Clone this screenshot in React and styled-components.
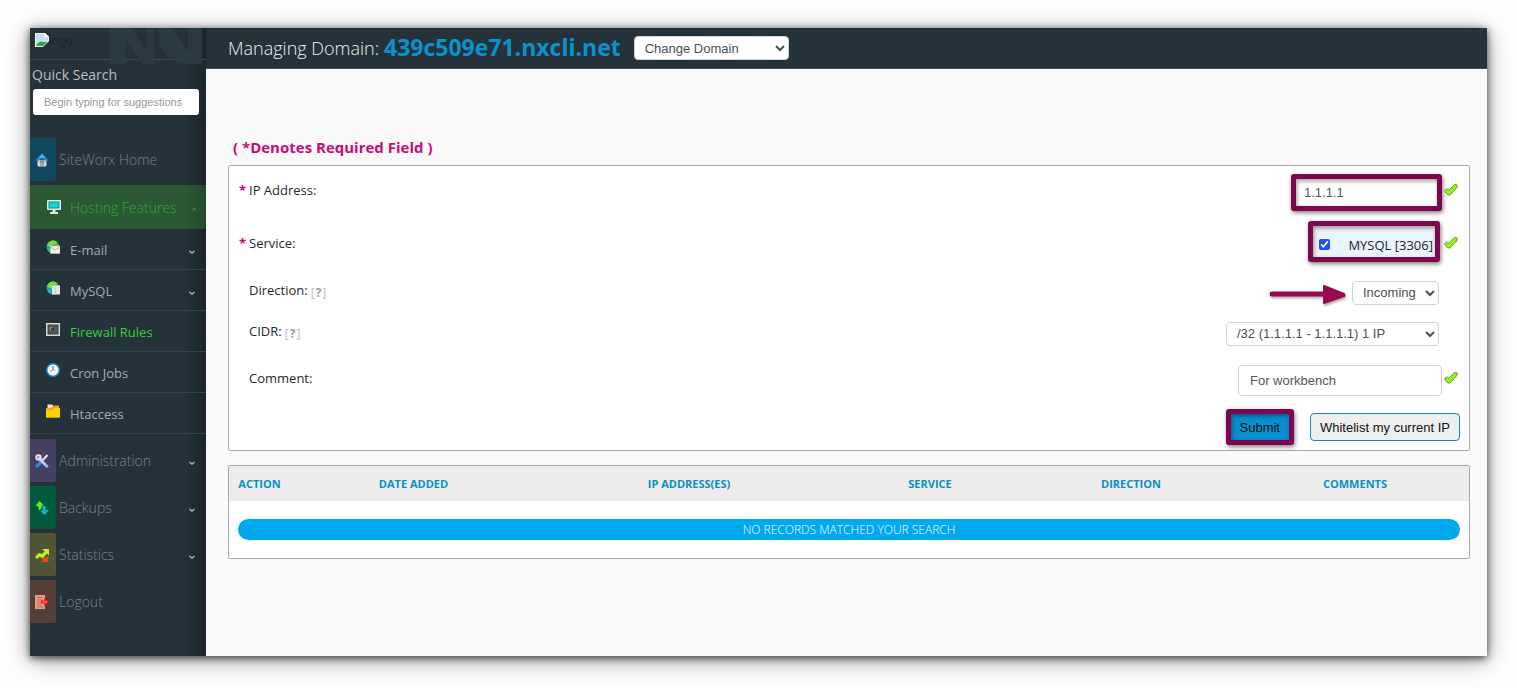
import React, { useState } from "react";
import styled, { createGlobalStyle } from "styled-components";

const GlobalStyle = createGlobalStyle`
  * {
    box-sizing: border-box;
  }

  body {
    margin: 0;
    background: #fefefe;
    font-family: "Open Sans", "Noto Sans", sans-serif;
    font-size: 13px;
    color: #212529;
  }
`;

const hostingLinks = [
  { label: "E-mail", icon: "mail", caret: true },
  { label: "MySQL", icon: "database", caret: true },
  { label: "Firewall Rules", icon: "firewall", active: true },
  { label: "Cron Jobs", icon: "clock" },
  { label: "Htaccess", icon: "folder" },
];

const bottomLinks = [
  { label: "Administration", icon: "tools", color: "#453f62", caret: true },
  { label: "Backups", icon: "backup", color: "#015a3b", caret: true },
  { label: "Statistics", icon: "stats", color: "#4f5535", caret: true },
  { label: "Logout", icon: "logout", color: "#553f37" },
];

const columns = [
  { title: "Action", width: 59 },
  { title: "Date Added", width: 251 },
  { title: "IP Address(es)", width: 300 },
  { title: "Service", width: 182 },
  { title: "Direction", width: 220 },
  { title: "Comments", width: 228 },
];

const globe = (
  <>
    <circle cx="7" cy="7" r="6.5" fill="#1596d8" />
    <path d="M1 5 Q3 0 8 .5 L11.500 2 L9 5 L7 4 L6 8 L2.500 6.500Z" fill="#7be02c" />
    <path d="M1 7.500 L5 9 L5 13 Q1.500 11.500 1 7.500Z" fill="#29c4a0" />
    <path d="M10 3 L13 5 L12 6 L9 6Z" fill="#4fc02c" />
  </>
);

const drawings = {
  home: (
    <>
      <path d="M2.500 7 H11.500 V12 Q11.500 13.500 10 13.500 H4 Q2.500 13.500 2.500 12Z" fill="#dcdcdc" />
      <path d="M7 0 L13 7 L11.500 8.500 L7 5 L2.500 8.500 L1 7Z" fill="#1d8fe8" />
      <path d="M7 2 L10 5.500 L7 4 L4 5.500Z" fill="#6cc6ff" />
      <circle cx="7" cy="9" r="2.500" fill="#8f8f96" />
      <path d="M5 10 H9 V13 H5Z" fill="#a9a9ad" />
    </>
  ),
  screen: (
    <>
      <rect x="0" y="0" width="14" height="10" rx="1" fill="#e9efe6" />
      <rect x="1.500" y="1.500" width="11" height="7" fill="#0c8d9c" />
      <rect x="2.500" y="2.500" width="9" height="5" fill="#0fd8dd" />
      <path d="M5.500 10 H8.500 V12 H11 V14 H3 V12 H5.500Z" fill="#dfe5da" />
    </>
  ),
  mail: (
    <>
      {globe}
      <rect x="4.500" y="6" width="9.500" height="7.500" fill="#f7f2e4" stroke="#cbbf9d" strokeWidth=".6" />
      <path d="M5 7 L9.200 10 L13.500 7" fill="none" stroke="#c9a184" strokeWidth=".9" />
    </>
  ),
  database: (
    <>
      {globe}
      <rect x="6" y="4.500" width="8" height="9" fill="#f4f6f6" />
      <path d="M6 7 H14 M6 9.500 H14 M6 12 H14 M9.500 4.500 V13.500" stroke="#b9c3c8" strokeWidth=".7" />
    </>
  ),
  firewall: (
    <>
      <rect x="0" y="1" width="14" height="13" fill="#d8d8d4" />
      <rect x="1.500" y="2.500" width="11" height="10" fill="#3a3c3d" />
      <rect x="2.500" y="3.500" width="9" height="8" fill="#55585a" />
      <path d="M4 5 H7 V8 H4Z" fill="#a4a6a6" />
      <path d="M5 5.500 H8 V8.500 H5Z" fill="#38393a" />
    </>
  ),
  clock: (
    <>
      <circle cx="7" cy="7" r="6.200" fill="#f4f8fb" stroke="#1689cf" strokeWidth="1.400" />
      <path d="M7 3 V7" stroke="#6c6f75" strokeWidth="1.200" />
      <path d="M7.500 6.500 L4 8.500" stroke="#d79a78" strokeWidth="1.200" />
      <path d="M8 7 H10" stroke="#c9bda7" strokeWidth="1" />
    </>
  ),
  folder: (
    <>
      <path d="M1.500 .5 H6 L7.500 2 H12 V7 H1.500Z" fill="#f6ead0" />
      <path d="M0 4 H5 L8 1.500 H13 V13.500 H0Z" fill="#f0a90b" />
      <path d="M0 6 H6 L8 4 H14 V13.500 H0Z" fill="#ffd010" />
    </>
  ),
  tools: (
    <>
      <path d="M12.500 1 L4 10" stroke="#e8e0f2" strokeWidth="2" />
      <path d="M6 8.500 L2 12" stroke="#2f8dea" strokeWidth="3.200" strokeLinecap="round" />
      <path d="M4 4 L11.500 12" stroke="#dac9ea" strokeWidth="2.600" strokeLinecap="round" />
      <circle cx="3.500" cy="3.500" r="2.200" fill="none" stroke="#eadff2" strokeWidth="2" />
      <path d="M10.500 10.500 L13 13" stroke="#8fb6f0" strokeWidth="2" />
    </>
  ),
  backup: (
    <>
      <path d="M4.500 0 L9 4.500 H6.500 V7.500 L4 9.500 L3 5 H.5Z" fill="#63ee16" />
      <path d="M7.500 5 H10.500 V9 H14 L9.500 14 L5 9.500 H7.500Z" fill="#17b4c7" />
    </>
  ),
  stats: (
    <>
      <path d="M1 5 L5 6 L9 9.500 L11 9.500 L13.500 7.500 V14 H6.500 L8.500 12 L4 9Z" fill="#f2421d" />
      <path d="M0 9 L4 5 L7 6 L9.500 3.500 L7.500 1 H14 V7.500 L12 5.500 L8 10 L4.500 8.500 L2 11Z" fill="#b9f327" />
    </>
  ),
  logout: (
    <>
      <rect x="0" y="0" width="10" height="14" fill="#e89a82" />
      <path d="M2 2.500 H8 M2 5 H7 M2 7.500 H6 M2 10 H7 M2 12 H8" stroke="#c9705a" />
      <path d="M6 5.500 H9 V3 L14 7 L9 11 V8.500 H6Z" fill="#f6211b" />
      <path d="M8 7 H12" stroke="#ff8a7a" />
    </>
  ),
  check: (
    <path
      d="M.5 8 Q2 5.500 3.500 6.200 L5 7.200 L10.500 1.500 Q12 .8 13.500 2.500 Q13.500 3.500 12.500 5 L6.500 11.500 Q5 13 3.500 11.500Z"
      fill="#98ee24"
      stroke="#57a51a"
      strokeLinejoin="round"
    />
  ),
};

const Icon = ({ name }) => (
  <svg width="14" height="14" viewBox="0 0 14 14" aria-hidden="true">
    {drawings[name]}
  </svg>
);

const Caret = ({ up }) => (
  <CaretSvg width="6" height="4" viewBox="0 0 6 4" $up={up} aria-hidden="true">
    <path
      d={up ? "M1 3.500 L3 1 L5 3.500" : "M.5 1 L3 3 L5.500 1"}
      fill="none"
      stroke="currentColor"
      strokeWidth={up ? 1 : 1.5}
    />
  </CaretSvg>
);

const SideLink = ({ label, icon, color, caret }) => (
  <MenuLink href="#">
    <Tile $color={color}>
      <Icon name={icon} />
    </Tile>
    <span>{label}</span>
    {caret && <Caret />}
  </MenuLink>
);

const Field = ({ label, id, required, help, tall, valid, children }) => (
  <Row $tall={tall}>
    <LabelCell>
      <Star>{required && "*"}</Star>
      <label htmlFor={id}>{label}:</label>
      {help && (
        <Help href="#">
          [<b>?</b>]
        </Help>
      )}
    </LabelCell>
    <Control>
      {children}
      <CheckSlot>{valid && <Icon name="check" />}</CheckSlot>
    </Control>
  </Row>
);

function App() {
  const [ip, setIp] = useState("1.1.1.1");
  const [mysql, setMysql] = useState(true);
  const [comment, setComment] = useState("For workbench");

  return (
    <>
      <GlobalStyle />
      <Frame>
        <Sidebar>
          <LogoBar>
            <LogoMark width="92" height="36" viewBox="0 0 92 36" aria-hidden="true">
              <path
                d="M0 0 H22 L36 24 V0 H44 V36 H32 L16 12 V36 H0Z M49 0 H62 L78 24 V0 H92 V36 H74 Q58 34 49 16Z"
                fill="#2b3a42"
              />
            </LogoMark>
            <svg width="14" height="14" viewBox="0 0 14 14" aria-hidden="true">
              <path d="M0 0 H10 L14 4 V8 L8 14 H0Z" fill="#f1f3f4" />
              <path d="M1 1 H9 V4 H13 V8 L8 13 H1Z" fill="#c9dbf5" />
              <path d="M1 13 Q4 7 8 9 L12 9 L8 13Z" fill="#2ba44a" />
              <path d="M10 0 V4 H14Z" fill="#fff" />
            </svg>
            <span>logo</span>
          </LogoBar>
          <SearchLabel htmlFor="search">Quick Search</SearchLabel>
          <SearchInput id="search" placeholder="Begin typing for suggestions" />
          <Menu>
            <SideLink label="SiteWorx Home" icon="home" color="#12475d" />
            <OpenLink href="#">
              <Icon name="screen" />
              <span>Hosting Features</span>
              <Caret up />
            </OpenLink>
            <SubMenu>
              {hostingLinks.map((item) => (
                <SubLink href="#" key={item.label} $active={item.active}>
                  <Icon name={item.icon} />
                  <span>{item.label}</span>
                  {item.caret && <Caret />}
                </SubLink>
              ))}
            </SubMenu>
            {bottomLinks.map((item) => (
              <SideLink key={item.label} {...item} />
            ))}
          </Menu>
        </Sidebar>

        <Page>
          <TopBar>
            <span>Managing Domain:</span>
            <Domain href="#">439c509e71.nxcli.net</Domain>
            <Select $width={155} aria-label="Change Domain">
              <option>Change Domain</option>
            </Select>
          </TopBar>
          <Content>
            <Required>( *Denotes Required Field )</Required>
            <Panel as="form" onSubmit={(e) => e.preventDefault()}>
              <Field label="IP Address" id="ip" required tall valid>
                <IpInput id="ip" value={ip} onChange={(e) => setIp(e.target.value)} />
              </Field>
              <Field label="Service" id="service" required tall valid>
                <ServiceBox>
                  <input
                    id="service"
                    type="checkbox"
                    checked={mysql}
                    onChange={(e) => setMysql(e.target.checked)}
                  />
                  MYSQL [3306]
                </ServiceBox>
              </Field>
              <Field label="Direction" id="direction" help>
                <Arrow width="78" height="24" viewBox="0 0 78 24" aria-hidden="true">
                  <path
                    d="M3 13 H55"
                    stroke="#960a50"
                    strokeWidth="5"
                    strokeLinecap="round"
                  />
                  <path
                    d="M55 5 L75 13 Q76 14 75 15 L55 22Z"
                    fill="#960a50"
                    stroke="#960a50"
                    strokeWidth="2"
                    strokeLinejoin="round"
                  />
                </Arrow>
                <Select id="direction" $width={87} $inForm>
                  <option>Incoming</option>
                </Select>
              </Field>
              <Field label="CIDR" id="cidr" help>
                <Select id="cidr" $width={213} $inForm>
                  <option>/32 (1.1.1.1 - 1.1.1.1) 1 IP</option>
                </Select>
              </Field>
              <Field label="Comment" id="comment" tall valid>
                <TextInput
                  id="comment"
                  value={comment}
                  onChange={(e) => setComment(e.target.value)}
                />
              </Field>
              <Actions>
                <SubmitButton type="submit">Submit</SubmitButton>
                <PlainButton type="button">Whitelist my current IP</PlainButton>
              </Actions>
            </Panel>
            <Panel>
              <Table>
                <colgroup>
                  {columns.map((col) => (
                    <col key={col.title} width={col.width} />
                  ))}
                </colgroup>
                <thead>
                  <tr>
                    {columns.map((col) => (
                      <th key={col.title}>{col.title}</th>
                    ))}
                  </tr>
                </thead>
                <tbody>
                  <tr>
                    <td colSpan={columns.length}>
                      <Empty>No records matched your search</Empty>
                    </td>
                  </tr>
                </tbody>
              </Table>
            </Panel>
          </Content>
        </Page>
      </Frame>
    </>
  );
}

export default App;

const Frame = styled.div`
  display: flex;
  margin: 28px 30px 32px;
  min-height: calc(100vh - 60px);
  background: #fafafa;
  box-shadow: 0 2px 8px rgba(0, 0, 0, 0.7), 0 4px 24px rgba(0, 0, 0, 0.35);
`;

const Sidebar = styled.nav`
  display: flex;
  flex-direction: column;
  width: 176px;
  flex-shrink: 0;
  background: linear-gradient(to right, #253239 88%, #1b262c);
`;

const LogoBar = styled.div`
  position: relative;
  display: flex;
  height: 32px;
  padding: 5px;
  border-bottom: 1px solid #3b4a54;
  font-size: 12px;
  line-height: 16px;
  color: #1c262b;
`;

const LogoMark = styled.svg`
  position: absolute;
  top: 0;
  left: 80px;
`;

const SearchLabel = styled.label`
  padding: 5px 2px;
  font-size: 14px;
  line-height: 19px;
  color: #b9bfc3;
`;

const SearchInput = styled.input`
  height: 26px;
  margin: 0 7px 0 3px;
  padding: 0 11px;
  border: 0;
  border-radius: 3px;
  background: #fff;
  font-family: "Liberation Sans", Arial, sans-serif;
  font-size: 11px;

  &::placeholder {
    color: #95989b;
  }
`;

const Menu = styled.div`
  display: flex;
  flex-direction: column;
  gap: 4px;
  margin-top: 23px;
`;

const CaretSvg = styled.svg`
  margin-left: auto;
  margin-right: 11px;
  margin-top: 4px;
  color: ${(props) => (props.$up ? "#3f9b46" : "#a9b2b9")};
`;

const MenuLink = styled.a`
  display: flex;
  align-items: center;
  gap: 3px;
  height: 43px;
  font-size: 14px;
  font-weight: 300;
  color: #76838b;
  text-decoration: none;
`;

const Tile = styled.span`
  display: flex;
  align-items: center;
  height: 43px;
  width: 26px;
  padding-left: 5px;
  border-radius: 0 2px 2px 0;
  background: ${(props) => props.$color};
`;

const OpenLink = styled(MenuLink)`
  gap: 9px;
  height: 44px;
  padding-left: 17px;
  margin-bottom: -4px;
  background: linear-gradient(to right, #2b5934 88%, #24492c);
  color: #36a33d;

  ${CaretSvg} {
    margin-right: 9px;
  }
`;

const SubMenu = styled.div`
  padding-bottom: 1px;
`;

const SubLink = styled.a`
  display: flex;
  align-items: center;
  gap: 10px;
  height: 41px;
  padding: 2px 0 0 16px;
  border-bottom: 1px solid #2f4355;
  font-size: 13px;
  color: ${(props) => (props.$active ? "#36cf36" : "#a3acb3")};
  text-decoration: none;

  svg:first-child {
    margin-bottom: 7px;
  }
`;

const Page = styled.main`
  flex: 1;
  min-width: 0;
`;

const TopBar = styled.header`
  display: flex;
  align-items: center;
  height: 41px;
  padding-left: 22px;
  border-bottom: 1px solid #434b50;
  background: #253239;
  font-size: 18px;
  font-weight: 300;
  color: #eceff1;
`;

const Domain = styled.a`
  margin: 0 13px 0 5px;
  font-size: 23px;
  font-weight: 700;
  line-height: 36px;
  padding-bottom: 2px;
  color: #0a91ce;
  text-decoration: none;
`;

const Content = styled.div`
  padding: 67px 17px 0 22px;
`;

const Required = styled.p`
  margin: 0 0 7px;
  padding-left: 5px;
  font-size: 15px;
  font-weight: 700;
  line-height: 22px;
  color: #cb0a77;
`;

const Panel = styled.section`
  margin-bottom: 14px;
  border: 1px solid #a9a9a9;
  border-radius: 2px;
  background: #fff;
`;

const Row = styled.div`
  display: flex;
  align-items: center;
  justify-content: space-between;
  height: ${(props) => (props.$tall ? 53 : 41)}px;
  padding: 0 9px;
`;

const LabelCell = styled.div`
  display: flex;
  align-items: center;
  padding-bottom: 5px;
  font-size: 13px;
  font-weight: 500;
  color: #26292d;
`;

const Star = styled.span`
  width: 11px;
  padding-left: 1px;
  font-weight: 700;
  color: #c9087a;
`;

const Help = styled.a`
  margin: 4px 0 0 3px;
  font-size: 12px;
  color: #bdbdbd;
  text-decoration: none;

  b {
    padding: 0 1px;
    color: #9f9f9f;
  }
`;

const Control = styled.div`
  display: flex;
  align-items: center;
`;

const CheckSlot = styled.span`
  display: flex;
  width: 18px;
  padding: 0 2px 6px;
`;

const TextInput = styled.input`
  width: 204px;
  height: 31px;
  padding: 0 11px;
  border: 1px solid #cfd2d5;
  border-radius: 4px;
  background: #fff;
  font-family: "Liberation Sans", Arial, sans-serif;
  font-size: 13px;
  color: #53575c;
`;

// maroon outline with a soft drop shadow on both sides
const highlight = `
  border: 5px solid #7d064f;
  border-radius: 3px;
  box-shadow: 1px 2px 4px rgba(0, 0, 0, 0.5), inset 1px 2px 4px rgba(0, 0, 0, 0.4);
`;

const IpInput = styled(TextInput)`
  width: 151px;
  height: 37px;
  padding: 0 8px;
  ${highlight}
`;

const ServiceBox = styled.label`
  display: flex;
  align-items: center;
  justify-content: space-between;
  width: 132px;
  height: 41px;
  margin: 0 2px 8px 0;
  padding: 6px 2px 0 6px;
  background: #e9f4fb;
  font-size: 13px;
  font-weight: 500;
  ${highlight}

  input {
    width: 11px;
    height: 11px;
    margin: 0;
    accent-color: #2450f0;
  }
`;

const Arrow = styled.svg`
  margin-right: 5px;
  filter: drop-shadow(1px 2px 1px rgba(0, 0, 0, 0.3));
`;

const Select = styled.select`
  width: ${(props) => props.$width}px;
  height: 24px;
  margin-right: ${(props) => (props.$inForm ? 3 : 0)}px;
  padding: 0 0 0 6px;
  border: 1px solid #ced4da;
  border-radius: 4px;
  background-color: #fff;
  font-family: "Liberation Sans", Arial, sans-serif;
  font-size: 13px;
  color: #495057;
`;

const Actions = styled.div`
  display: flex;
  align-items: center;
  justify-content: flex-end;
  gap: 16px;
  height: 43px;
  padding: 0 9px 3px;
`;

const Button = styled.button`
  padding: 0 9px;
  font-family: "Liberation Sans", Arial, sans-serif;
  font-size: 13px;
  color: #111;
`;

const SubmitButton = styled(Button)`
  height: 36px;
  background: #078fd0;
  ${highlight}
`;

const PlainButton = styled(Button)`
  height: 28px;
  border: 1px solid #1c84bb;
  border-radius: 4px;
  background: #eee;
`;

const Table = styled.table`
  width: 100%;
  table-layout: fixed;
  border-collapse: collapse;

  th {
    height: 35px;
    padding: 0;
    background: #eeedec;
    font-size: 11px;
    font-weight: 700;
    text-transform: uppercase;
    color: #0a8fbf;
  }

  th:first-child {
    padding-left: 2px;
  }

  td {
    padding: 18px 9px;
  }
`;

const Empty = styled.div`
  border-radius: 11px;
  background: #00a9ee;
  font-size: 12px;
  font-weight: 300;
  line-height: 21px;
  text-align: center;
  text-transform: uppercase;
  color: #f2fbff;
`;
